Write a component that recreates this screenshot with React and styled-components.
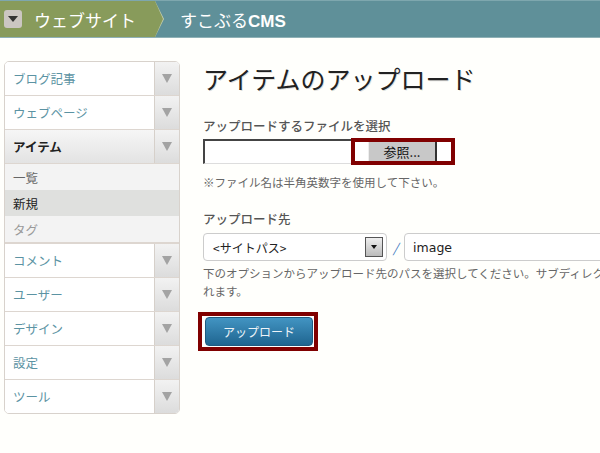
import React from 'react'
import styled, {createGlobalStyle} from 'styled-components'

const Global = createGlobalStyle`
html, body {
  margin: 0;
  padding: 0;
  overflow: hidden;
  background: #fffffc;
  font-family: "Noto Sans CJK JP", "Liberation Sans", sans-serif;
}
`

const Header = styled.div`
display: flex;
align-items: center;
height: 36px;
background: #5f9099;
border-top: 1px solid #7ea7ae;
border-bottom: 1px solid #8fb1b6;
color: #fff;
`

const Crumb = styled.div`
position: relative;
display: flex;
align-items: center;
gap: 12px;
height: 100%;
width: 155px;
padding-left: 4px;
box-sizing: border-box;
background: #889b5b;
font-size: 17px;
&::before, &::after{
  content: "";
  position: absolute;
  top: 0;
  border-top: 18px solid transparent;
  border-bottom: 18px solid transparent;
}
&::before{
  right: -9px;
  border-left: 9px solid #c9d0b0;
}
&::after{
  right: -8px;
  border-left: 8px solid #889b5b;
}
`

const MenuIcon = styled.span`
display: flex;
align-items: center;
justify-content: center;
width: 18px;
height: 18px;
border-radius: 3px;
background: #cbc6c2;
&::after{
  content: "";
  border-left: 5px solid transparent;
  border-right: 5px solid transparent;
  border-top: 6px solid #333;
}
`

const Title = styled.div`
padding-left: 25px;
font-size: 17px;
b{ font-family: "Liberation Sans", sans-serif; font-weight: bold; }
`

const Body = styled.div`
display: flex;
gap: 23px;
padding: 23px 0 0 4px;
`

const Sidebar = styled.ul`
list-style: none;
margin: 0;
padding: 0;
width: 174px;
flex: none;
border: 1px solid #d8d2cc;
border-radius: 5px;
overflow: hidden;
background: #fff;
`

const Row = styled.li`
display: flex;
height: 33px;
border-bottom: 1px solid #ddd6d0;
background: ${p => p.$open ? 'linear-gradient(#f6f6f6,#e3e3e3)' : '#fff'};
&:last-child{ border-bottom: none; }
`

const RowLabel = styled.span`
flex: 1;
display: flex;
align-items: center;
padding-left: 8px;
font-size: 12.5px;
color: ${p => p.$open ? '#222' : '#5b93a3'};
font-weight: ${p => p.$open ? 'bold' : 'normal'};
`

const Toggle = styled.span`
width: 24px;
display: flex;
align-items: center;
justify-content: center;
border-left: 1px solid #d6d0ca;
background: linear-gradient(#f2f2f2,#dcdcdc);
&::after{
  content: "";
  border-left: 5px solid transparent;
  border-right: 5px solid transparent;
  border-top: 9px solid #a3a3a3;
}
`

const SubRow = styled.li`
display: flex;
align-items: center;
height: 26px;
padding-left: 8px;
font-size: 12.5px;
background: ${p => p.$active ? '#dfe0de' : '#f3f3f3'};
color: ${p => p.$active ? '#222' : p.$muted ? '#999' : '#666'};
&:nth-last-child(6){ border-bottom: 2px solid #ddd6d0; }
`

const Main = styled.div`
width: 440px;
flex: none;
color: #333;
`

const Heading = styled.h1`
margin: 0;
font-size: 25px;
line-height: 34px;
font-weight: normal;
color: #222;
text-shadow: 1px 1px 0 rgba(0,0,0,0.12);
`

const Label = styled.div`
margin-top: ${p => p.$top || 22}px;
font-size: 12.5px;
line-height: 18px;
color: #555;
font-weight: 500;
`

const FileRow = styled.div`
display: flex;
align-items: center;
margin-top: 3px;
`

const FileInput = styled.div`
width: 146px;
height: 22px;
background: #fff;
border-top: 2px solid #444;
border-left: 2px solid #444;
border-bottom: 1px solid #ddd;
`

const Frame = styled.div`
display: flex;
align-items: center;
border: 4px solid #800000;
padding: ${p => p.$pad || '0'};
background: #fff;
`

const BrowseButton = styled.span`
display: flex;
align-items: center;
justify-content: center;
width: 66px;
height: 19px;
margin: 0 14px 0 13px;
background: #c8c8c8;
border-right: 2px solid #333;
border-left: 1px solid #eee;
font-size: 13px;
color: #111;
`

const Note = styled.div`
margin-top: ${p => p.$top || 8}px;
font-size: 11.5px;
line-height: 18px;
color: #666;
white-space: nowrap;
`

const PathRow = styled.div`
display: flex;
align-items: center;
gap: 6px;
margin-top: 5px;
`

const Select = styled.div`
display: flex;
align-items: center;
justify-content: space-between;
width: 184px;
height: 28px;
box-sizing: border-box;
padding: 0 3px 0 9px;
border: 1px solid #ccc;
border-radius: 4px;
background: #fff;
font-size: 12px;
color: #222;
`

const SelectArrow = styled.span`
display: flex;
align-items: center;
justify-content: center;
width: 16px;
height: 18px;
border: 1px solid #555;
background: linear-gradient(#eee,#bbb);
&::after{
  content: "";
  border-left: 3px solid transparent;
  border-right: 3px solid transparent;
  border-top: 4px solid #111;
}
`

const Slash = styled.span`
color: #3a78c0;
font-size: 13px;
font-style: italic;
`

const TextInput = styled.div`
display: flex;
align-items: center;
width: 220px;
height: 28px;
box-sizing: border-box;
padding-left: 8px;
border: 1px solid #ccc;
border-radius: 4px;
background: #fff;
font-family: "DejaVu Sans", sans-serif;
font-size: 12.5px;
color: #222;
`

const ButtonFrame = styled(Frame)`
display: inline-flex;
margin: 12px 0 0 -5px;
padding: 1px 1px 1px 3px;
`

const UploadButton = styled.button`
width: 108px;
height: 29px;
border: 1px solid #1f5a80;
border-radius: 4px;
background: linear-gradient(#4294c2,#1f6590);
color: #eef4f8;
font-family: inherit;
font-size: 12px;
`

const sections = ['ブログ記事','ウェブページ']
const rest = ['コメント','ユーザー','デザイン','設定','ツール']

export default function App(){
  return (
    <>
      <Global/>
      <Header>
        <Crumb><MenuIcon/>ウェブサイト</Crumb>
        <Title>すこぶる<b>CMS</b></Title>
      </Header>
      <Body>
        <Sidebar>
          {sections.map(s => (
            <Row key={s}><RowLabel>{s}</RowLabel><Toggle/></Row>
          ))}
          <Row $open><RowLabel $open>アイテム</RowLabel><Toggle/></Row>
          <SubRow>一覧</SubRow>
          <SubRow $active>新規</SubRow>
          <SubRow $muted>タグ</SubRow>
          {rest.map(s => (
            <Row key={s}><RowLabel>{s}</RowLabel><Toggle/></Row>
          ))}
        </Sidebar>
        <Main>
          <Heading>アイテムのアップロード</Heading>
          <Label>アップロードするファイルを選択</Label>
          <FileRow>
            <FileInput/>
            <Frame><BrowseButton>参照...</BrowseButton></Frame>
          </FileRow>
          <Note>※ファイル名は半角英数字を使用して下さい。</Note>
          <Label $top={19}>アップロード先</Label>
          <PathRow>
            <Select>&lt;サイトパス&gt;<SelectArrow/></Select>
            <Slash>/</Slash>
            <TextInput>image</TextInput>
          </PathRow>
          <Note $top={3}>
            下のオプションからアップロード先のパスを選択してください。サブディレクトリも作成さ<br/>れます。
          </Note>
          <ButtonFrame><UploadButton>アップロード</UploadButton></ButtonFrame>
        </Main>
      </Body>
    </>
  )
}
